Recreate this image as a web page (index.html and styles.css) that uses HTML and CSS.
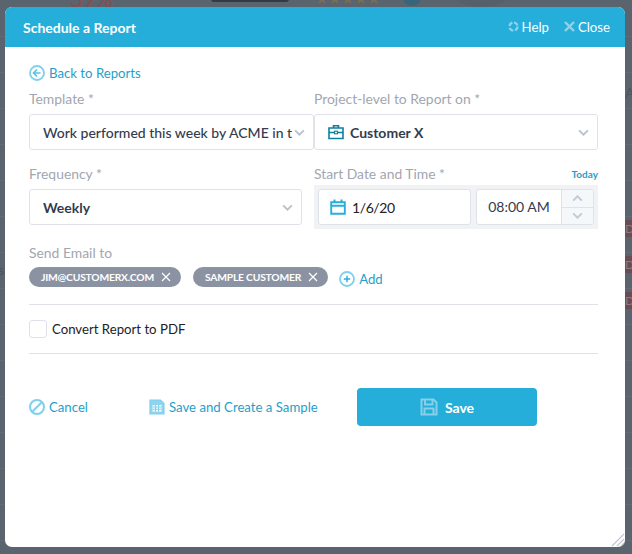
FILE: index.html
```html
<!DOCTYPE html>
<html lang="en">
<head>
<meta charset="utf-8">
<title>Schedule a Report</title>
<link rel="stylesheet" href="styles.css">
</head>
<body>
<div class="backdrop" aria-hidden="true">
  <span class="bg-percent">39%</span>
  <span class="bg-stars">★★★★★</span>
  <span class="bg-dot"></span>
  <span class="bg-blob"></span>
  <span class="bg-bar"></span>
  <span class="bg-side-r">AS</span>
  <span class="bg-side-l">sl</span>
  <span class="bg-pill bg-pill-a">D</span>
  <span class="bg-pill bg-pill-b">D</span>
  <span class="bg-pill bg-pill-c">D</span>
</div>
<main class="modal">
  <header class="modal-head">
    <h1 class="modal-title">Schedule a Report</h1>
    <nav class="head-actions">
      <a class="head-link"><svg class="ic-head" viewBox="0 0 11 11"><circle cx="5.5" cy="5.5" r="4" fill="none" stroke="#8fd3ea" stroke-width="2.2" stroke-dasharray="4.6 1.7"/></svg>Help</a>
      <a class="head-link"><svg class="ic-head" viewBox="0 0 11 11"><path d="M1 1l9 9M10 1l-9 9" stroke="#8fd3ea" stroke-width="2.4" fill="none"/></svg>Close</a>
    </nav>
  </header>
  <div class="modal-body">
    <a class="link back-link"><svg class="ic-16" viewBox="0 0 16 16"><circle cx="8" cy="8" r="7" fill="none" stroke="#7fd0ea" stroke-width="1.8"/><path d="M8 4.5L4.5 8 8 11.5M4.8 8h6.7" fill="none" stroke="#5cc3e4" stroke-width="1.7"/></svg>Back to Reports</a>

    <div class="form-grid">
      <div class="field">
        <label class="label">Template *</label>
        <div class="select">
          <span class="select-text">Work performed this week by ACME in t</span>
          <svg class="chev" viewBox="0 0 12 8"><path d="M1 1.5l5 5 5-5" fill="none" stroke="#b9c2cf" stroke-width="2.2"/></svg>
        </div>
      </div>
      <div class="field">
        <label class="label">Project-level to Report on *</label>
        <div class="select select-joined">
          <svg class="case" viewBox="0 0 16 16"><path d="M5.5 4V1.8h5V4M1 4h14v10.5H1zM1 8.5h14" fill="none" stroke="#0f7f9f" stroke-width="1.6"/><rect x="6.5" y="7.2" width="3" height="2.6" fill="#fff" stroke="#0f7f9f" stroke-width="1.1"/></svg>
          <span class="select-text">Customer X</span>
          <svg class="chev" viewBox="0 0 12 8"><path d="M1 1.5l5 5 5-5" fill="none" stroke="#b9c2cf" stroke-width="2.2"/></svg>
        </div>
      </div>
      <div class="field">
        <label class="label">Frequency *</label>
        <div class="select select-narrow">
          <span class="select-text">Weekly</span>
          <svg class="chev" viewBox="0 0 12 8"><path d="M1 1.5l5 5 5-5" fill="none" stroke="#b9c2cf" stroke-width="2.2"/></svg>
        </div>
      </div>
      <div class="field">
        <div class="label-row">
          <label class="label">Start Date and Time *</label>
          <a class="today">Today</a>
        </div>
        <div class="datetime">
          <div class="date-box">
            <svg class="cal" viewBox="0 0 16 16"><path d="M1.2 3.2h13.6v11.6H1.2zM1.2 6.8h13.6" fill="none" stroke="#29aedb" stroke-width="1.9"/><path d="M4.5 0.5v3.5M11.5 0.5v3.5" stroke="#29aedb" stroke-width="2"/></svg>
            <span class="date-text">1/6/20</span>
          </div>
          <div class="time-box">
            <span class="time-text">08:00 AM</span>
            <div class="stepper">
              <span class="step"><svg class="step-ic" viewBox="0 0 12 8"><path d="M1 6.5l5-5 5 5" fill="none" stroke="#c2cad5" stroke-width="2.2"/></svg></span>
              <span class="step"><svg class="step-ic" viewBox="0 0 12 8"><path d="M1 1.5l5 5 5-5" fill="none" stroke="#c2cad5" stroke-width="2.2"/></svg></span>
            </div>
          </div>
        </div>
      </div>
    </div>

    <div class="email">
      <label class="label">Send Email to</label>
      <div class="chips">
        <span class="chip">JIM@CUSTOMERX.COM<svg class="chip-x" viewBox="0 0 10 10"><path d="M1 1l8 8M9 1L1 9" stroke="#fff" stroke-width="1.2" fill="none"/></svg></span>
        <span class="chip">SAMPLE CUSTOMER<svg class="chip-x" viewBox="0 0 10 10"><path d="M1 1l8 8M9 1L1 9" stroke="#fff" stroke-width="1.2" fill="none"/></svg></span>
        <a class="link add-link"><svg class="ic-16" viewBox="0 0 16 16"><circle cx="8" cy="8" r="7" fill="none" stroke="#7fd0ea" stroke-width="1.8"/><path d="M8 4.8v6.4M4.8 8h6.4" stroke="#29aedb" stroke-width="1.4"/></svg>Add</a>
      </div>
    </div>

    <div class="pdf-row">
      <span class="checkbox"></span>
      <span class="pdf-text">Convert Report to PDF</span>
    </div>

    <div class="actions">
      <a class="link cancel"><svg class="ic-16" viewBox="0 0 16 16"><circle cx="8" cy="8" r="7" fill="none" stroke="#7fd0ea" stroke-width="2"/><path d="M3.2 12.8l9.6-9.6" stroke="#7fd0ea" stroke-width="2"/></svg>Cancel</a>
      <a class="link sample"><svg class="ic-16" viewBox="0 0 16 16"><path d="M1 1h10.5L15 4.5V15H1z" fill="#8ed4ec" stroke="#7fd0ea" stroke-width="1.2"/><rect x="3.5" y="6" width="9" height="6.5" fill="#fff"/><path d="M3.5 8h9M3.5 10.2h9M6.5 6v6.5M9.5 6v6.5" stroke="#7fd0ea" stroke-width="1"/></svg>Save and Create a Sample</a>
      <a class="save-btn"><svg class="save-ic" viewBox="0 0 18 18"><path d="M1.5 1.5h12l3 3v12h-15z" fill="none" stroke="#86d0ea" stroke-width="2"/><path d="M5 2v4.5h7.5V2M4.5 16v-5.5h9V16" fill="none" stroke="#86d0ea" stroke-width="2"/></svg>Save</a>
    </div>
  </div>
  <svg class="grip" viewBox="0 0 14 14"><path d="M13 1L1 13M13 6l-7 7M13 10l-3 3" stroke="#c3c7ce" stroke-width="1.2" fill="none"/></svg>
</main>
</body>
</html>
```

FILE: styles.css
```css
* { box-sizing: border-box; }
html, body { margin: 0; height: 100%; }
body {
  width: 632px;
  height: 554px;
  overflow: hidden;
  position: relative;
  background: #5a646e;
  padding: 7px 7px 7px 5px;
  font-family: Lato, "Open Sans", sans-serif;
  font-size: 14px;
  color: #333c4e;
}
.backdrop {
  position: absolute;
  inset: 0;
  overflow: hidden;
  background: repeating-linear-gradient(#5a646e 0 35px, #626b74 35px 36px) 0 1px;
}
.bg-percent { position: absolute; left: 70px; top: -12px; font-size: 22px; line-height: 22px; color: #8c4a50; }
.bg-stars { position: absolute; left: 315px; top: -9px; font-size: 15px; line-height: 15px; letter-spacing: 0; color: #7c6d4f; }
.bg-dot { position: absolute; left: 403px; top: -12px; width: 18px; height: 18px; border-radius: 50%; background: #37657c; }
.bg-blob { position: absolute; left: 453px; top: -20px; width: 56px; height: 27px; border-radius: 50%; background: #56606a; }
.bg-bar { position: absolute; left: 211px; top: -4px; width: 78px; height: 6px; border-radius: 3px; background: #333b45; }
.bg-side-r { position: absolute; left: 625px; top: 84px; font-size: 14px; line-height: 17px; color: #4d565f; }
.bg-side-l { position: absolute; left: -2px; top: 261px; font-size: 14px; line-height: 17px; color: #4d565f; }
.bg-pill {
  position: absolute;
  left: 625px;
  width: 12px;
  height: 17px;
  background: #6a4d54;
  color: #8d7a80;
  font-size: 12px;
  line-height: 17px;
}
.bg-pill-a { top: 220px; }
.bg-pill-b { top: 256px; }
.bg-pill-c { top: 292px; }

.modal {
  position: relative;
  width: 620px;
  height: 540px;
  background: #fff;
  border-radius: 7px;
  overflow: hidden;
  display: flex;
  flex-direction: column;
}
.modal-head {
  height: 40px;
  flex: none;
  background: #25aed9;
  color: #fff;
  display: flex;
  align-items: center;
  justify-content: space-between;
  padding: 0 15px 0 18px;
}
.modal-title { margin: 0; font-size: 14px; font-weight: 700; }
.head-actions { display: flex; gap: 15px; margin-top: -1px; }
.head-link { display: flex; align-items: center; gap: 3px; font-size: 13.2px; }
.ic-head { width: 11px; height: 11px; flex: none; }
.ic-16 { width: 16px; height: 16px; flex: none; }

.modal-body { padding: 18px 27px 0 24px; }
.link { display: inline-flex; align-items: center; gap: 4px; color: #1f9fc9; font-size: 13.2px; }
.back-link { height: 16px; }

.form-grid {
  display: grid;
  grid-template-columns: 285px 284px;
  row-gap: 15px;
  margin-top: 6px;
}
.label { display: block; color: #a2a6b0; font-size: 13.9px; line-height: 17px; }
.label-row { display: flex; justify-content: space-between; align-items: center; }
.today { color: #1f9fc9; font-size: 10px; font-weight: 700; }
.select {
  margin-top: 7px;
  height: 36px;
  border: 1px solid #e1e1ec;
  border-radius: 3px;
  background: #fff;
  display: flex;
  align-items: center;
  padding: 0 0 0 13px;
  position: relative;
}
.select-text {
  white-space: nowrap;
  overflow: hidden;
  font-weight: 500;
  font-size: 14px;
  flex: 1;
}
.select .chev { position: absolute; right: 8px; top: 14px; }
.select-narrow { width: 273px; }
.select-narrow .select-text { font-weight: 700; }
.select-joined { gap: 6px; }
.select:not(.select-joined) .select-text { margin-right: 20px; }
.select-joined .select-text { font-weight: 700; }
.chev { width: 11px; height: 7px; flex: none; }
.case { width: 16px; height: 16px; flex: none; }

.datetime {
  margin-top: 3px;
  height: 44px;
  background: #f0f2f3;
  padding: 4px 4px;
  display: flex;
  gap: 5px;
}
.date-box {
  width: 153px;
  background: #fff;
  border: 1px solid #e1e1ec;
  border-radius: 3px;
  display: flex;
  align-items: center;
  padding-left: 11px;
  gap: 6px;
  color: #222;
}
.date-text { font-size: 14px; letter-spacing: -0.4px; }
.cal { width: 16px; height: 16px; flex: none; }
.time-box {
  flex: 1;
  background: #fff;
  border: 1px solid #e1e1ec;
  border-radius: 3px;
  display: flex;
  overflow: hidden;
}
.time-text { flex: 1; text-align: center; font-size: 14px; line-height: 33px; color: #333c4e; }
.stepper { width: 32px; flex: none; display: flex; flex-direction: column; border-left: 1px solid #e1e1ec; background: #f5f8fb; }
.step { flex: 1; display: flex; align-items: center; justify-content: center; }
.step + .step { border-top: 1px solid #e1e1ec; }
.step-ic { width: 11px; height: 7px; }

.email { margin-top: 15px; }
.chips { display: flex; align-items: center; gap: 12px; margin-top: 6px; }
.chip {
  height: 20px;
  background: #8b93a3;
  border-radius: 10px;
  color: #fff;
  font-size: 10.3px;
  font-weight: 700;
  padding: 0 10px 0 12px;
  display: inline-flex;
  align-items: center;
  gap: 7px;
  letter-spacing: -0.2px;
}
.chip-x { width: 10px; height: 10px; }
.add-link { margin-left: -1px; margin-top: 4px; }

.pdf-row {
  margin-top: 17px;
  height: 50px;
  border-top: 1px solid #e1e1ec;
  border-bottom: 1px solid #e1e1ec;
  display: flex;
  align-items: center;
  gap: 5px;
}
.checkbox { width: 18px; height: 18px; border: 1px solid #e1e1ec; border-radius: 3px; background: #fff; }
.pdf-text { color: #222; font-size: 13.2px; }

.actions { display: flex; align-items: center; margin-top: 34px; height: 38px; }
.cancel { width: 120px; margin-top: -1px; }
.sample { width: 208px; margin-top: -1px; }
.save-btn {
  width: 180px;
  height: 38px;
  background: #25aed9;
  border-radius: 4px;
  color: #fff;
  font-weight: 700;
  display: flex;
  align-items: center;
  justify-content: center;
  gap: 7px;
}
.save-ic { width: 18px; height: 18px; }
.grip { position: absolute; right: 0; bottom: 0; width: 14px; height: 14px; }
```
